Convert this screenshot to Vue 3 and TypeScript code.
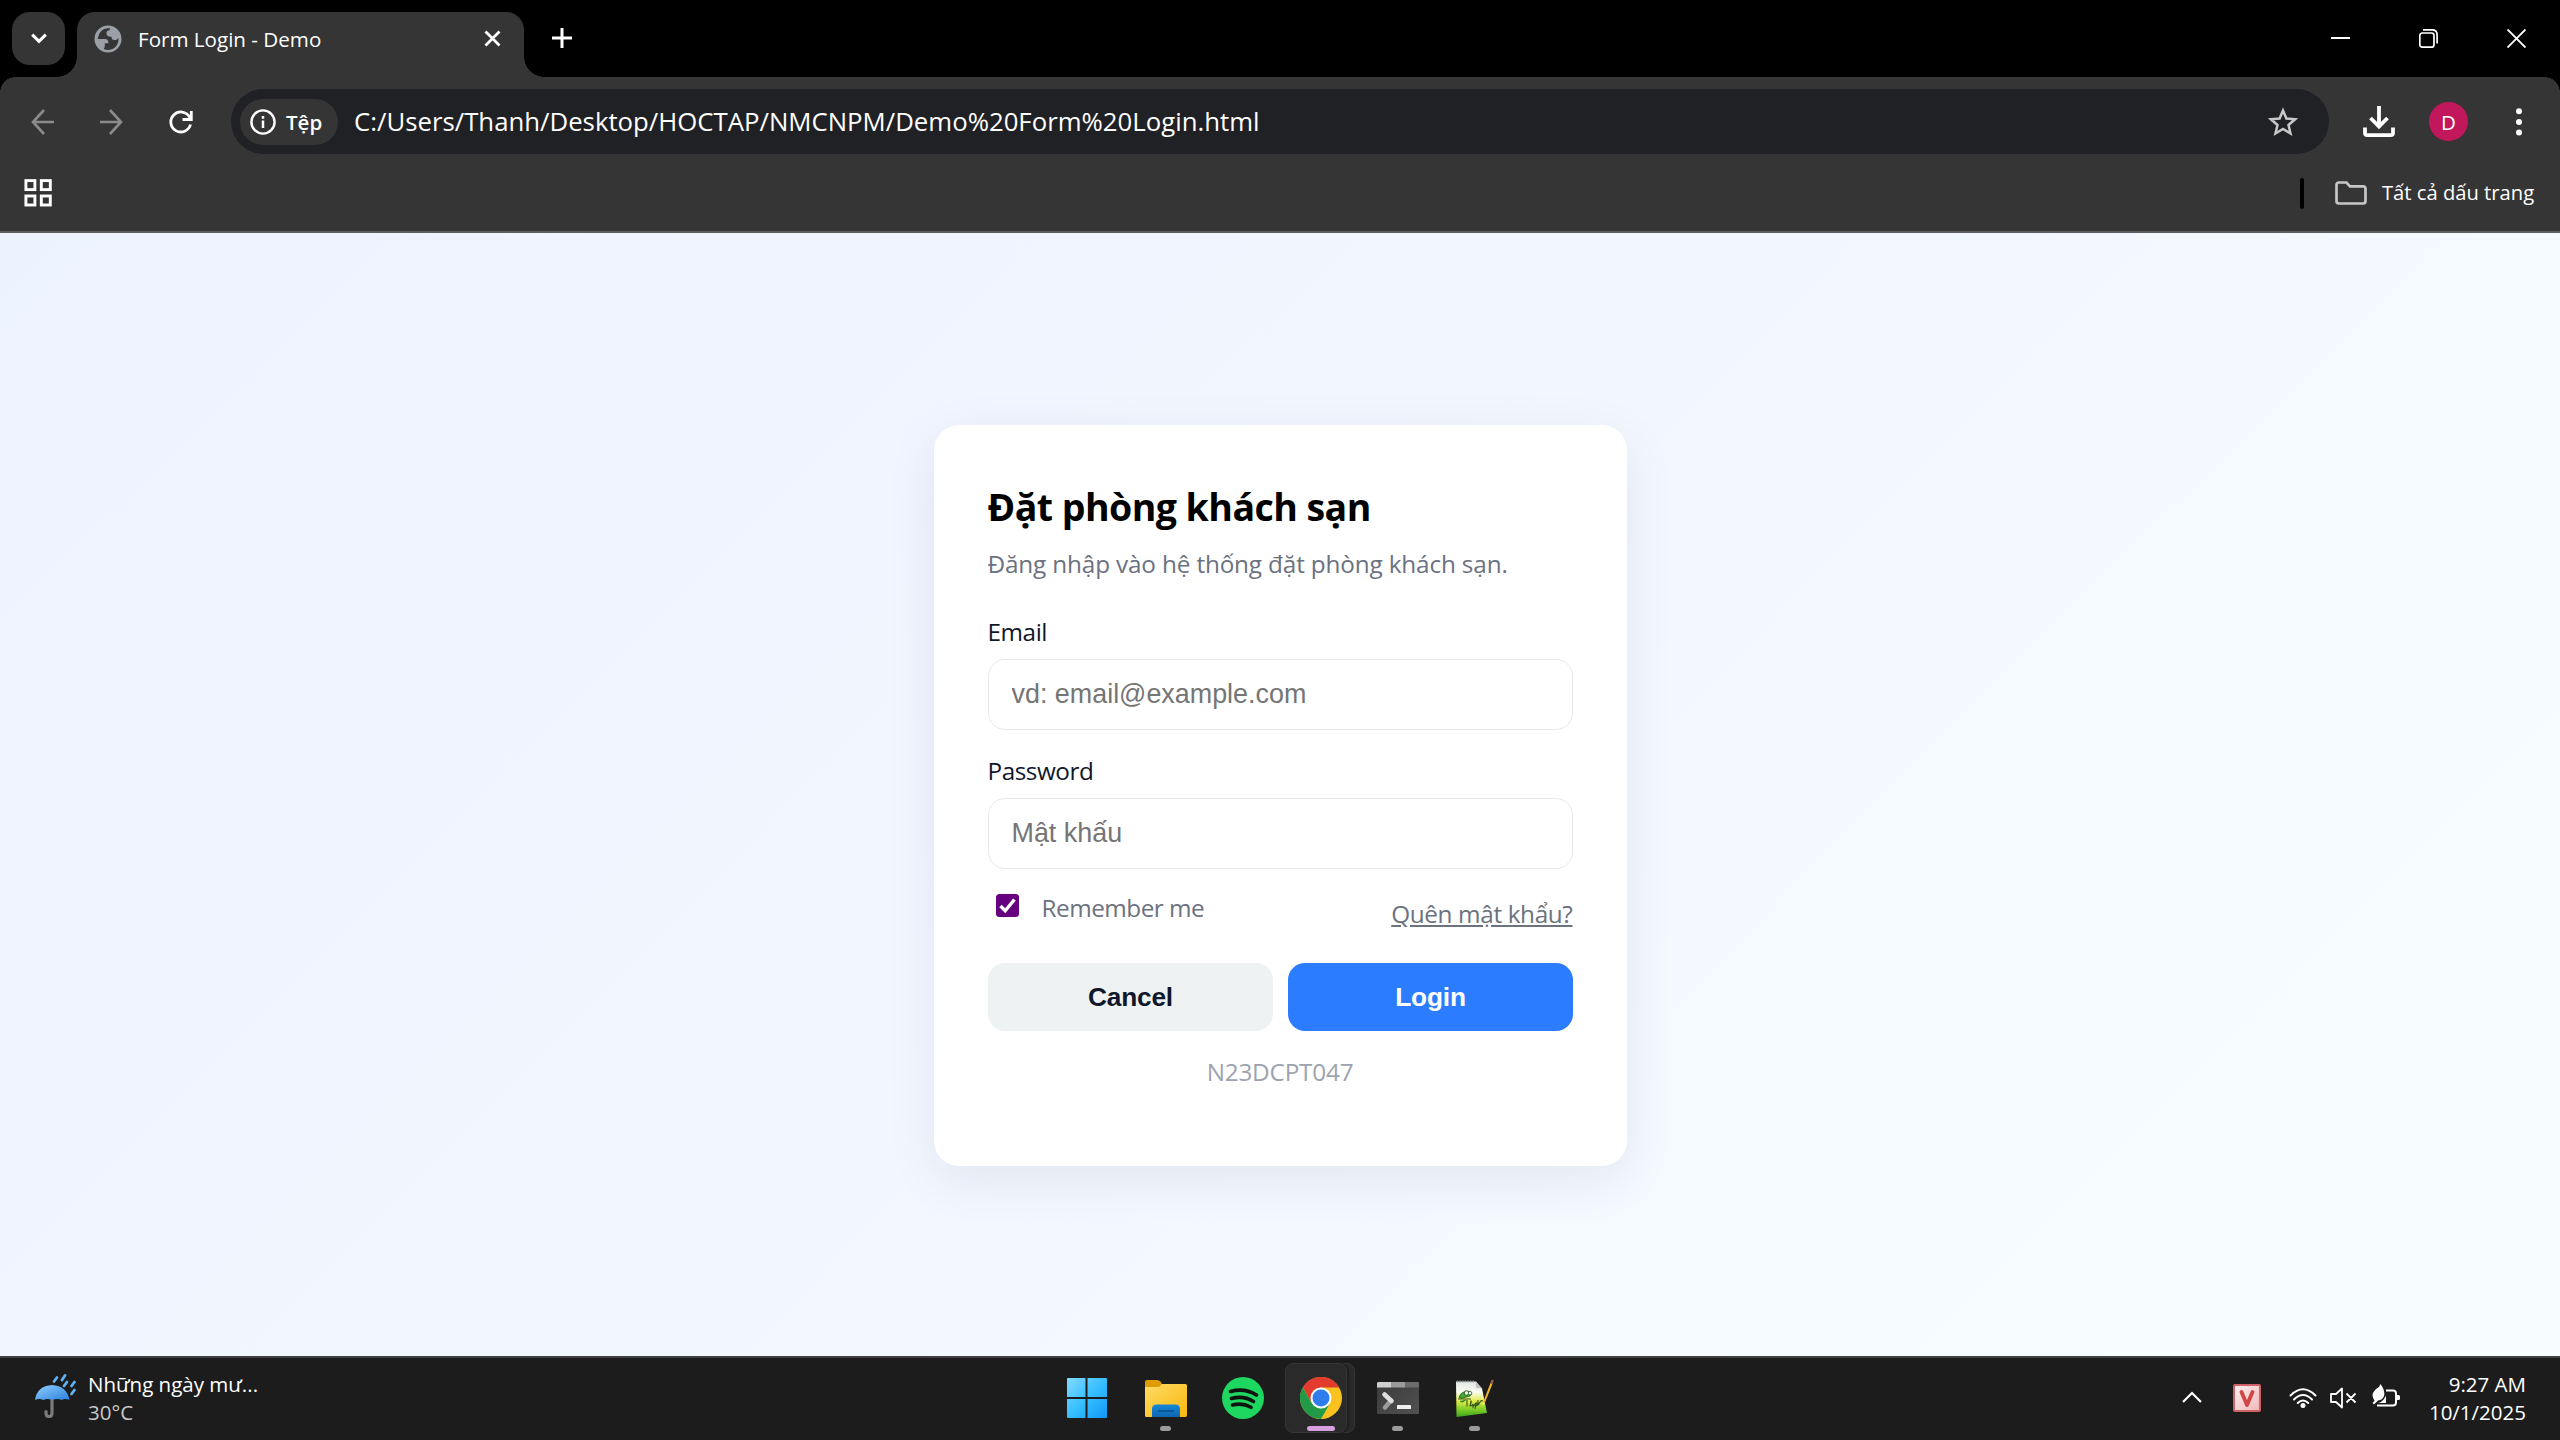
<script setup lang="ts">
interface Caption { title: string; url: string }
const page: Caption = {
  title: 'Form Login - Demo',
  url: 'C:/Users/Thanh/Desktop/HOCTAP/NMCNPM/Demo%20Form%20Login.html',
}
const drops: string[] = ['M54 41.500l3-4', 'M62 40l3-4.500', 'M64 46l3-4', 'M71.500 46l3-4', 'M71.500 54l3-4']
</script>

<template>
  <div class="screen">
    <header class="tabstrip">
      <div class="tab-search">
        <svg width="16" height="11" viewBox="0 0 16 11"><path d="M1.200 1.600l6.800 6.800 6.800-6.800" fill="none" stroke="#fff" stroke-width="3" /></svg>
      </div>
      <div class="tab">
        <svg class="globe" width="28" height="28" viewBox="0 0 28 28">
          <circle cx="14" cy="14" r="13.500" fill="#9aa0a6" />
          <path d="M16 3.500c-5-1-10 2-11.500 7.500L3.500 14h6.800c3.200 0 4.200 1.500 4 4.200h-3.500v3.600l-1 2.200c5 2.400 11 .3 13.500-4.700 1-2 1.300-4 1-6.300-1 1.700-2.500 2-4 2-2 0-2.800-1.200-2.800-3.300-3.500.2-5-1-5-3.700 0-1.800 1-2.500 3.200-2.700z" fill="#353535" />
        </svg>
        <span class="tab-title">{{ page.title }}</span>
        <svg class="tab-close" width="17" height="17" viewBox="0 0 17 17"><path d="M1.500 1.500l14 14m0-14l-14 14" stroke="#fff" stroke-width="2.800" /></svg>
      </div>
      <svg class="plus" width="20" height="20" viewBox="0 0 20 20"><path d="M10 0v20M0 10h20" stroke="#fff" stroke-width="3" /></svg>
      <div class="window-buttons">
        <svg width="19" height="19" viewBox="0 0 19 19"><path d="M0 9h19" stroke="#fff" stroke-width="2" /></svg>
        <svg width="19" height="19" viewBox="0 0 19 19" fill="none" stroke="#fff" stroke-width="1.700"><rect x="0.800" y="4" width="14.200" height="14.200" rx="2.500" /><path d="M4 .9h9c3 0 5.100 2 5.100 5v8.500" /></svg>
        <svg width="19" height="19" viewBox="0 0 19 19"><path d="M.5.500l18 18m0-18l-18 18" stroke="#fff" stroke-width="1.900" /></svg>
      </div>
    </header>

    <section class="chrome">
      <div class="toolbar">
        <div class="nav">
          <svg width="24" height="28" viewBox="0 0 24 28" fill="none" stroke="#8b8b8b" stroke-width="2.600"><path d="M23 14H2M13 2L2 14l11 12" /></svg>
          <svg width="24" height="28" viewBox="0 0 24 28" fill="none" stroke="#8b8b8b" stroke-width="2.600"><path d="M0 14h21M10 2l11 12-11 12" /></svg>
          <svg width="24" height="24" viewBox="0 0 24 24" fill="none" stroke="#fff" stroke-width="2.800"><path d="M21.500 14.500A10 10 0 1 1 20.500 7l1.700 2.200M22.300 1v8.500H13.500" /></svg>
        </div>
        <div class="omnibox">
          <div class="chip">
            <svg width="26" height="26" viewBox="0 0 26 26"><circle cx="13" cy="13" r="11.600" fill="none" stroke="#fff" stroke-width="2.400" /><path d="M13 11.500v7.500M13 7v2.700" stroke="#fff" stroke-width="2.500" /></svg>
            <span>Tệp</span>
          </div>
          <span class="url">{{ page.url }}</span>
          <svg class="star" width="30" height="30" viewBox="0 0 30 30"><path d="M15 3.500l3.400 8 8.700.8-6.600 5.700 2 8.500L15 22l-7.500 4.500 2-8.500-6.600-5.700 8.700-.8z" fill="none" stroke="#c7c7c7" stroke-width="2.500" /></svg>
        </div>
        <svg class="download" width="32" height="32" viewBox="0 0 32 32" fill="none" stroke="#fff" stroke-width="3.800"><path d="M16 0v20M7.500 12l8.500 8.500 8.500-8.500M2 21.500v5.200q0 2.400 2.400 2.400h23.200q2.400 0 2.400-2.400v-5.200" /></svg>
        <div class="avatar">D</div>
        <svg class="menu" width="6" height="28" viewBox="0 0 6 28" fill="#fff"><circle cx="3" cy="3.200" r="3" /><circle cx="3" cy="13.900" r="3" /><circle cx="3" cy="24.600" r="3" /></svg>
      </div>
      <div class="bookmarks">
        <svg width="28" height="28" viewBox="0 0 28 28" fill="none" stroke="#fff" stroke-width="2.900"><rect x="1.900" y="1.600" width="9" height="9" /><rect x="17.300" y="1.600" width="9" height="9" /><rect x="1.900" y="17" width="9" height="9" /><rect x="17.300" y="17" width="9" height="9" /></svg>
        <i class="divider"></i>
        <svg width="32" height="24" viewBox="0 0 32 24"><path d="M4 1.500h7.500L15 5.300h13q2.500 0 2.500 2.500v12.200q0 2.500-2.500 2.500H4q-2.500 0-2.500-2.500V4Q1.500 1.500 4 1.500z" fill="none" stroke="#c7c7c7" stroke-width="2.700" /></svg>
        <span class="all">Tất cả dấu trang</span>
      </div>
    </section>

    <main class="page">
      <form class="card" @submit.prevent>
        <h2>Đặt phòng khách sạn</h2>
        <p class="lead">Đăng nhập vào hệ thống đặt phòng khách sạn.</p>
        <label class="email-label">Email</label>
        <input type="text" placeholder="vd: email@example.com" />
        <label class="pass-label">Password</label>
        <input type="password" placeholder="Mật khấu" />
        <div class="options">
          <svg width="23" height="23" viewBox="0 0 23 23"><rect width="23" height="23" rx="3.500" fill="#660080" /><path d="M4.500 12l4.700 4.800L18.500 5.500" fill="none" stroke="#fff" stroke-width="3.400" /></svg>
          <span class="remember">Remember me</span>
          <a class="forgot">Quên mật khẩu?</a>
        </div>
        <div class="actions">
          <button type="button" class="cancel">Cancel</button>
          <button type="submit" class="login">Login</button>
        </div>
        <p class="code">N23DCPT047</p>
      </form>
    </main>

    <footer class="taskbar">
      <div class="weather">
        <svg width="42" height="44" viewBox="35 34 42 44">
          <defs><linearGradient id="umb" x1="0" y1="0" x2="1" y2="1"><stop offset="0" stop-color="#8fd0ff" /><stop offset="1" stop-color="#2c80dc" /></linearGradient></defs>
          <path d="M52 56v17q0 3.500-3 3.500T46 73v-1.500" fill="none" stroke="#7b7b7b" stroke-width="3.200" stroke-linecap="round" />
          <path d="M35 60Q37 46 52 45q15 1 17.500 15-4-2-8 0-4-2-9.500 0-5-2-8.500 0-4-2-8.500 0z" fill="url(#umb)" />
          <path v-for="d in drops" :key="d" :d="d" stroke="#60b2f4" stroke-width="2.800" stroke-linecap="round" />
        </svg>
        <div class="weather-text"><span class="w1">Những ngày mư...</span><span class="w2">30°C</span></div>
      </div>

      <div class="apps">
        <div class="app first">
          <svg width="42" height="42" viewBox="0 0 42 42">
            <defs><linearGradient id="win" gradientUnits="userSpaceOnUse" x1="0" y1="0" x2="41" y2="41"><stop offset="0" stop-color="#87dcff" /><stop offset=".5" stop-color="#38c0ff" /><stop offset="1" stop-color="#1098f8" /></linearGradient></defs>
            <path d="M2 1h17.500v19H1V2q0-1 1-1zM21.500 1H40q1 0 1 1v18H21.500zM1 22h18.500v19H2q-1 0-1-1zM21.500 22H41v18q0 1-1 1H21.500z" fill="url(#win)" />
          </svg>
        </div>
        <div class="app">
          <svg width="42" height="42" viewBox="0 0 42 42">
            <defs><linearGradient id="fold" x1="0" y1="0" x2="1" y2="1"><stop offset="0" stop-color="#ffdb66" /><stop offset="1" stop-color="#f8b70d" /></linearGradient><linearGradient id="fb" x1="0" y1="0" x2="0" y2="1"><stop offset="0" stop-color="#1488d8" /><stop offset="1" stop-color="#0f66b0" /></linearGradient></defs>
            <path d="M0 5q0-2 2-2h10q2 0 3.500 1.500L17 7v6H0z" fill="#df9c09" />
            <path d="M0 10h14l3-3h23.500q1.500 0 1.500 1.500V38q0 2-1.500 2H1.500Q0 40 0 38.500z" fill="url(#fold)" />
            <path d="M7 40V32q0-4.500 4.500-4.500H30.500Q35 27.500 35 32v8z" fill="url(#fb)" /><path d="M13 34h16" stroke="#0b559b" stroke-width="2" />
          </svg>
          <i class="dot"></i>
        </div>
        <div class="app">
          <svg width="42" height="42" viewBox="0 0 42 42"><circle cx="21" cy="21" r="21" fill="#1ed760" /><path d="M8.500 14.500q14-4 26 3.500M9.500 21.500q12-3.300 22 3M10.500 28q10-2.500 18.500 2.300" fill="none" stroke="#10140f" stroke-width="3.600" stroke-linecap="round" /></svg>
        </div>
        <div class="app active">
          <i class="stack"></i><i class="tile"></i>
          <svg width="42" height="42" viewBox="0 0 42 42">
            <circle cx="21" cy="21" r="21" fill="#fbc21f" />
            <path d="M2.800 10.500A21 21 0 0 1 39.200 10.500H21L12 26z" fill="#e33b2e" />
            <path d="M2.800 10.500A21 21 0 0 0 21 42L30.100 26.200 21 31.500 11.900 26.200z" fill="#229a47" />
            <circle cx="21" cy="21" r="10.500" fill="#fff" /><circle cx="21" cy="21" r="8.500" fill="#2f7cec" />
          </svg>
          <i class="dot wide"></i>
        </div>
        <div class="app">
          <svg width="42" height="42" viewBox="0 0 42 42">
            <defs><linearGradient id="term" x1="0" y1="0" x2="1" y2="1"><stop offset="0" stop-color="#3a3a3a" /><stop offset="1" stop-color="#515151" /></linearGradient></defs>
            <rect y="5" width="42" height="32" rx="1.500" fill="url(#term)" />
            <path d="M1 5h13v5.500H0V6z" fill="#cfcfcf" /><path d="M14 5h14v5.500H14z" fill="#9a9a9a" /><path d="M28 5h13l1 1v4.500H28z" fill="#6c6c6c" />
            <path d="M14 23.500l-6 7" stroke="#9b9b9b" stroke-width="4.500" stroke-linecap="round" /><path d="M7.500 17.500l7 6.500" stroke="#dedede" stroke-width="4.500" stroke-linecap="round" /><rect x="20" y="28" width="14" height="4" rx=".6" fill="#efefef" />
          </svg>
          <i class="dot"></i>
        </div>
        <div class="app">
          <svg width="42" height="42" viewBox="0 0 42 42">
            <defs><linearGradient id="npp" x1="0" y1="0" x2="0" y2="1"><stop offset="0" stop-color="#e4e7e4" /><stop offset=".3" stop-color="#fafcf2" /><stop offset=".55" stop-color="#e1ed48" /><stop offset=".8" stop-color="#7acb26" /><stop offset="1" stop-color="#3aa31f" /></linearGradient></defs>
            <path d="M2 4.500h20l6 7L33 36 2.500 40z" fill="url(#npp)" /><path d="M21.500 4.500l6.500 7-6-.5z" fill="#bfc3c3" />
            <path d="M3 4.500h18" stroke="#8d9493" stroke-width="2.200" stroke-dasharray="1.300 1.300" />
            <path d="M5 20.500q2-6 7-5.500 4-1 5 1 1 3.500-5 4-4 2.500-7 .5zM6 24q3 2.500 6-1.500" fill="#47a632" stroke="#205f1b" stroke-width=".8" />
            <circle cx="12.500" cy="16" r="2.300" fill="#eff5e8" stroke="#276322" stroke-width="1" /><circle cx="16" cy="16.200" r="1.800" fill="#eff5e8" stroke="#276322" stroke-width=".8" />
            <path d="M4 22h13M13 23v6.500M16 28q2-3 1-4l-1 5q2 0 3-2v3q2-3 3-4l-1 6m1-6q3 0 0 3 3-1 4-4m-2-2v5m2-3q1-2 3-1" fill="none" stroke="#38571c" stroke-width="1.100" />
            <path d="M29 25.500L36.500 6l2 .8-7.500 18.700-2.600 2.500z" fill="#f4b52a" /><path d="M36.500 6l1.300-3.500 2 .8L38.500 7z" fill="#9c6353" /><path d="M29 25.500l2 .5-2.600 2.500z" fill="#fff0c7" />
          </svg>
          <i class="dot"></i>
        </div>
      </div>

      <div class="tray">
        <svg class="up" width="20" height="12" viewBox="0 0 20 12"><path d="M1 11l9-9 9 9" fill="none" stroke="#fff" stroke-width="2.200" /></svg>
        <svg class="vkey" width="28" height="28" viewBox="0 0 28 28"><defs><linearGradient id="vk" x1="0" y1="0" x2="1" y2="1"><stop offset="0" stop-color="#fff2f2" /><stop offset="1" stop-color="#f0b6b8" /></linearGradient></defs><rect x="1" y="1" width="26" height="26" rx="1" fill="url(#vk)" stroke="#cf6267" stroke-width="2" /><path d="M8.500 8l5.500 13 5.500-13" fill="none" stroke="#cf4644" stroke-width="3.800" stroke-linejoin="round" stroke-linecap="round" /></svg>
        <svg class="wifi" width="28" height="22" viewBox="0 0 28 22" fill="none" stroke="#fff" stroke-width="2" stroke-linecap="round"><path d="M1.500 8.500Q14-4 26.500 8.500M5 12.500q9-9 18 0M8.700 16q5.300-5 10.600 0" /><circle cx="14" cy="18.500" r="2.500" fill="#fff" stroke="none" /></svg>
        <svg class="sound" width="27" height="22" viewBox="0 0 27 22" fill="none" stroke="#fff" stroke-width="1.800" stroke-linejoin="round"><path d="M1 7h5l6-5.500v19L6 15H1zM16.500 6.500l9 9m0-9l-9 9" /></svg>
        <svg class="battery" width="28" height="24" viewBox="0 0 28 24"><path d="M14 6.500h7q3 0 3 3v9q0 3-3 3H5" fill="none" stroke="#fff" stroke-width="2" /><path d="M25 11h1.500q1.500 0 1.500 1.500v2q0 1.500-1.500 1.500H25z" fill="#fff" /><path d="M8.500 0q5 7 3.500 12-1.500 4-6 4.500L2 20.500.6 19l2-2.500Q-1 12 1.500 8 3 5 7 3z" fill="#fff" /><path d="M14 11.500v7.500H6.500q5-1.500 7.500-7.500z" fill="#fff" /></svg>
        <div class="clock"><span class="c1">9:27 AM</span><span class="c2">10/1/2025</span></div>
      </div>
    </footer>
  </div>
</template>

<style>
html, body { margin: 0; background: #1c1c1c; }
</style>

<style scoped>
* { box-sizing: border-box; }
svg { display: block; flex: none; }
.screen { width: 2560px; height: 1440px; display: flex; flex-direction: column; overflow: hidden; font-family: "Open Sans", "Noto Sans", sans-serif; color: #fff; white-space: nowrap; }
.tabstrip { height: 77px; background: #000; display: flex; align-items: flex-start; padding: 12px 12px 0; flex: none; }
.tab-search { width: 53px; height: 53px; border-radius: 18px; background: #353535; display: flex; align-items: center; justify-content: center; margin-right: 12px; }
.tab { position: relative; width: 447px; height: 65px; border-radius: 18px 18px 0 0; background: #353535; display: flex; align-items: center; padding: 0 23px 12px 17px; }
.tab::before, .tab::after { content: ""; position: absolute; bottom: 0; width: 20px; height: 20px; }
.tab::before { left: -20px; background: radial-gradient(circle at 0 0, transparent 19.500px, #353535 20px); }
.tab::after { right: -20px; background: radial-gradient(circle at 100% 0, transparent 19.500px, #353535 20px); }
.tab-title { margin-left: 16px; font-size: 20.600px; }
.tab-close { margin-left: auto; }
.plus { margin: 16px 0 0 28px; }
.window-buttons { margin: 17px 22px 0 auto; display: flex; gap: 69px; }
.chrome { position: relative; height: 156px; flex: none; background: #353535; border-bottom: 2px solid #5d5e60; }
.chrome::before, .chrome::after { content: ""; position: absolute; top: 0; width: 15px; height: 15px; }
.chrome::before { left: 0; background: radial-gradient(circle at 100% 100%, transparent 14.500px, #000 15px); }
.chrome::after { right: 0; background: radial-gradient(circle at 0 100%, transparent 14.500px, #000 15px); }
.toolbar { height: 88px; padding: 1px 26px 0 31px; display: flex; align-items: center; }
.nav { display: flex; align-items: center; gap: 45px; width: 200px; }
.omnibox { width: 2098px; height: 65px; border-radius: 33px; background: #202124; display: flex; align-items: center; padding: 0 31px 0 9px; }
.chip { width: 98px; height: 46px; border-radius: 23px; background: #353535; display: flex; align-items: center; padding-left: 10px; gap: 10px; font-size: 20.500px; font-weight: 600; }
.url { margin-left: 16px; font-size: 25.750px; padding-bottom: 2px; }
.star { margin-left: auto; }
.download { margin-left: 34px; }
.avatar { width: 39px; height: 39px; border-radius: 50%; background: #c2185b; margin-left: 34px; display: flex; align-items: center; justify-content: center; font-size: 20.500px; }
.menu { margin-left: auto; margin-right: 12px; }
.bookmarks { height: 56px; display: flex; align-items: center; padding: 0 27px 0 24px; }
.divider { width: 4px; height: 31px; border-radius: 2px; background: #000; margin-left: auto; margin-right: 31px; }
.all { font-size: 20.200px; margin-left: 15px; width: 151px; padding-bottom: 2px; }
.page { flex: 1; background: linear-gradient(135deg, #edf2ff 0%, #f7fdff 100%); display: flex; justify-content: center; align-items: flex-start; padding-top: 192px; }
.card { width: 693px; height: 741px; border-radius: 25px; background: #fff; padding: 54px 54px 0; box-shadow: 0 14px 52px rgba(20, 30, 60, .08); color: #0f172a; }
h2 { margin: 0; height: 56px; line-height: 56px; font-size: 37.500px; letter-spacing: -.55px; font-weight: 700; color: #000; }
.lead { margin: 1px 0 -1px; height: 56px; line-height: 56px; font-size: 24.300px; letter-spacing: -.15px; color: #6b7280; }
label { position: relative; top: -1px; display: block; height: 34px; line-height: 34px; font-size: 24.300px; letter-spacing: -.45px; }
.email-label, .pass-label { margin-top: 25px; margin-bottom: 9px; }
input { display: block; width: 585px; height: 71px; border: 1px solid #e6e9ec; border-radius: 17px; padding: 0 23px; font: 26.900px "Liberation Sans", Arial, sans-serif; background: #fff; outline: 0; }
input::placeholder { color: #757575; opacity: 1; }
.options { height: 94px; display: flex; align-items: flex-start; padding: 25px 0 0 8px; }
.remember { margin-left: 23px; margin-top: -2px; font-size: 24.300px; letter-spacing: -.5px; line-height: 32px; color: #6b7280; }
.forgot { margin-left: auto; margin-top: 4px; font-size: 24.300px; letter-spacing: -.35px; line-height: 32px; color: #6b7280; text-decoration: underline; }
.actions { display: flex; gap: 15px; }
button { width: 285px; height: 68px; border: 0; border-radius: 17px; padding: 0 0 0 1px; font: 700 26.250px "Liberation Sans", Arial, sans-serif; letter-spacing: -.2px; }
.cancel { background: #eef2f3; color: #0f172a; }
.login { background: #2b7cff; color: #fff; }
.code { margin: 24px 0 0; text-align: center; font-size: 24.300px; letter-spacing: -.2px; line-height: 34px; color: #9ca3af; }
.taskbar { height: 84px; flex: none; background: #1c1c1c; border-top: 2px solid #404143; display: flex; position: relative; justify-content: space-between; }
.weather { display: flex; padding: 16px 0 0 35px; width: 1050px; font-size: 20.500px; }
.weather-text { display: flex; flex-direction: column; margin: -4px 0 0 11px; line-height: 28px; }
.w2 { color: #c8c8c8; }
.apps { display: flex; width: 464px; }
.app { position: relative; width: 77.300px; height: 82px; padding-top: 19px; display: flex; justify-content: center; }
.app.first { padding-right: 3px; }
.app svg { position: relative; }
.dot { position: absolute; width: 11px; height: 5px; border-radius: 3px; background: #9a9a9a; top: 68px; left: 33px; }
.dot.wide { width: 28px; left: 25px; background: #d8a0df; }
.tile, .stack { position: absolute; top: 5px; height: 70px; border-radius: 8px; border: 1px solid #363636; }
.tile { left: 3px; width: 62px; background: #2a2a2a; box-shadow: 2px 0 0 #1f1f1f; }
.stack { left: 11px; width: 62px; background: #292929; }
.tray { width: 1046px; display: flex; justify-content: flex-end; padding: 0 34px 0 0; }
.up { margin: 33px 31px 0 0; }
.vkey { margin: 26px 28px 0 0; }
.wifi { margin: 29px 13px 0 0; }
.sound { margin: 29px 15px 0 0; }
.battery { margin: 26px 0 0; }
.clock { width: 126px; display: flex; flex-direction: column; align-items: flex-end; padding-top: 12px; font-size: 20.500px; line-height: 28px; }
</style>
